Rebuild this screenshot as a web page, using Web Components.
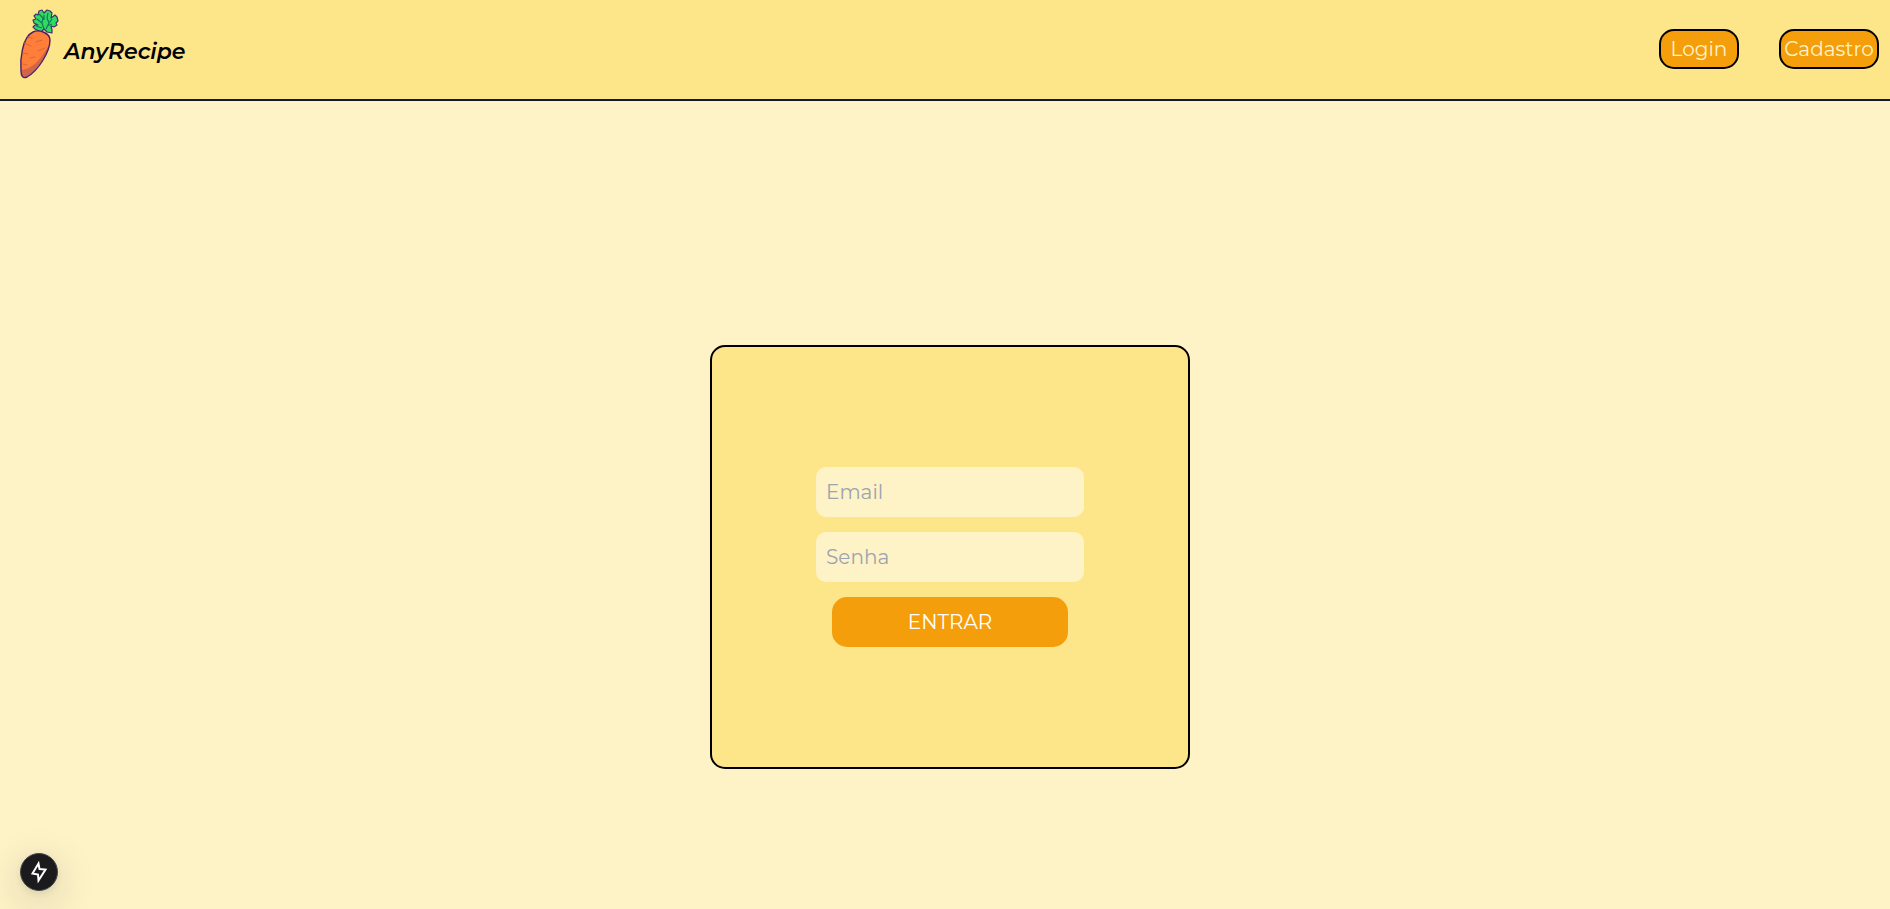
<!DOCTYPE html>
<html lang="pt-BR">
<head>
<meta charset="utf-8">
<meta name="viewport" content="width=device-width, initial-scale=1">
<title>AnyRecipe</title>
<style>
  html { height: 100%; }
  body {
    margin: 0;
    min-height: 100%;
    display: flex;
    flex-direction: column;
    background: #fef3c7;
    color: #000;
    font: 20px/28px Montserrat, Inter, sans-serif;
    --panel: #fde68a;
    --field: #fef3c7;
    --accent: #f59e0b;
  }
</style>
</head>
<body>
<app-header>
  <brand-logo>AnyRecipe</brand-logo>
  <nav-button slot="actions" style="--width: 80px">Login</nav-button>
  <nav-button slot="actions" style="--width: 100px">Cadastro</nav-button>
</app-header>
<login-card></login-card>
<dev-badge></dev-badge>

<script>
  function define(name, html) {
    const template = document.createElement('template');
    template.innerHTML = '<style>*{box-sizing:border-box}:host{box-sizing:border-box}</style>' + html;
    customElements.define(name, class extends HTMLElement {
      constructor() {
        super();
        this.attachShadow({ mode: 'open' }).append(template.content.cloneNode(true));
      }
    });
  }

  define('app-header', `
    <style>
      :host { display: block; }
      header { display: flex; justify-content: space-between; align-items: center; min-height: 101px; padding: 0 11px 1px 16px; background: var(--panel); border-bottom: 2px solid #111827; }
      nav { display: flex; gap: 40px; }
    </style>
    <header><slot></slot><nav><slot name="actions"></slot></nav></header>`);

  define('brand-logo', `
    <style>
      :host { display: block; }
      a { display: flex; align-items: center; gap: 4px; color: inherit; text-decoration: none; font-size: 22px; font-style: italic; font-weight: 600; }
      svg { display: block; width: 44px; height: 76px; margin-bottom: 10px; }
      span { padding-top: 6px; }
    </style>
    <a href="#">
      <svg viewBox="16 6 44 76" aria-hidden="true">
        <g stroke="#45306f" stroke-width="1.2" stroke-linejoin="round">
          <path d="M41 32 L35 29 L33 27 L35 25 L38 25 L34 23 L33 20 L36 19 L34 16 L36 14 L38 15 L39 11 L42 10 L44 13 L47 10 L50 11 L52 13 L51 18 L55 15 L57 17 L58 21 L56 23 L57 25 L54 27 L51 26 L52 30 L52 33 L47 32 L44 29 Z" fill="#2fdb61"/>
          <path d="M39 14 L43 18 L42 23 M37 19 L42 23 L44 29 M48 13 L47 18 L49 23 L46 29 M52 19 L49 23 M44 15 L44 20 M36 26 L42 28 M52 24 L47 26" fill="none" stroke="#17785a"/>
        </g>
        <path d="M33 32 C39 29 50 33 50 40 C50 52 38 71 27 77 C23 79 21 76 21 71 C20 60 22 37 33 32 Z" fill="#ff7f3a"/>
        <path d="M49 45 C43 55 35 69 21 70 C21 76 23 79 27 77 C36 71 47 55 49 45 Z" fill="#d1644a"/>
        <path d="M33 32 C39 29 50 33 50 40 C50 52 38 71 27 77 C23 79 21 76 21 71 C20 60 22 37 33 32 Z" fill="none" stroke="#4b216c" stroke-width="1.4"/>
        <path d="M28 37 L32 38 M36 42 L42 40 M24 43 L31 46 M38 51 L45 48 M23 53 L28 54 M30 58 L35 57 M23 64 L27 65" fill="none" stroke="#d96636" stroke-linecap="round"/>
      </svg>
      <span><slot></slot></span>
    </a>`);

  define('nav-button', `
    <style>
      :host { display: block; }
      button { display: block; width: var(--width); height: 40px; padding: 0; border: 2px solid #000; border-radius: 15px; background: var(--accent); color: var(--field); font: inherit; cursor: pointer; }
    </style>
    <button type="button"><slot></slot></button>`);

  define('login-card', `
    <style>
      :host { flex: 1; display: flex; align-items: center; justify-content: center; padding: 104px 0 0 10px; }
      form { display: flex; flex-direction: column; align-items: center; justify-content: center; gap: 15px; width: 480px; max-width: 100%; padding: 120px 16px; border: 2px solid #000; border-radius: 15px; background: var(--panel); }
      input { width: 268px; height: 50px; padding: 0 10px; border: 0; border-radius: 10px; background: var(--field); font: inherit; color: #000; }
      input::placeholder { color: #9ca3af; opacity: 1; }
      button { width: 236px; height: 50px; padding: 0; border: 0; border-radius: 15px; background: var(--accent); color: #fff; font: inherit; cursor: pointer; }
    </style>
    <form>
      <input type="email" placeholder="Email" aria-label="Email">
      <input type="password" placeholder="Senha" aria-label="Senha">
      <button type="submit">ENTRAR</button>
    </form>`);

  define('dev-badge', `
    <style>
      :host { position: fixed; left: 20px; bottom: 18px; }
      button { display: grid; place-items: center; width: 38px; height: 38px; padding: 0; border: 1px solid #46464a; border-radius: 50%; background: #1b1b1e; box-shadow: 0 11px 40px rgba(0,0,0,.18), 0 2px 10px rgba(0,0,0,.09); }
      svg { display: block; }
    </style>
    <button type="button" aria-label="Indicador"><svg width="20" height="24" viewBox="0 0 20 24" fill="none" stroke="#fff" stroke-width="2" stroke-linejoin="miter"><path d="M9.500 3.500 L3.500 13.500 L9 14.500 L9.500 20.500 L16.500 9.500 L10.500 9 Z"/></svg></button>`);
</script>
</body>
</html>
